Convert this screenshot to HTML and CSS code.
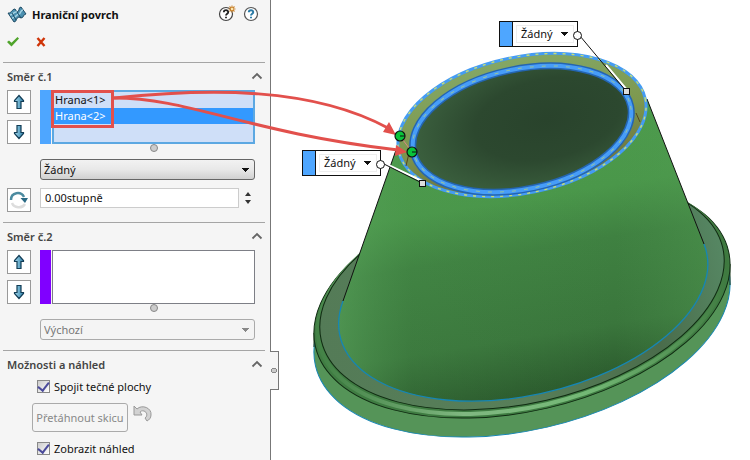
FILE: index.html
```
<!DOCTYPE html>
<html lang="cs">
<head>
<meta charset="utf-8">
<title>Hraniční povrch</title>
<link rel="stylesheet" href="styles.css">
</head>
<body>
<svg class="defs" width="0" height="0" aria-hidden="true">
  <defs>
    <linearGradient id="steel" x1="0" y1="0" x2="1" y2="0"><stop offset="0" stop-color="#a8dcf0"/><stop offset="1" stop-color="#2e7fa8"/></linearGradient>
    <symbol id="arrow-up" viewBox="0 0 14 16"><path d="M7 1.500 11.500 6.500V7.500H9V14.500H5V7.500H2.500V6.500Z" fill="url(#steel)" stroke="#123c55" stroke-width="1.200"/></symbol>
    <symbol id="arrow-down" viewBox="0 0 14 16"><path d="M7 14.500 11.500 9.500V8.500H9V1.500H5V8.500H2.500V9.500Z" fill="url(#steel)" stroke="#123c55" stroke-width="1.200"/></symbol>
    <symbol id="chevron" viewBox="0 0 12 8"><path d="M1.500 6.500 6 2 10.500 6.500" fill="none" stroke="#666" stroke-width="1.800"/></symbol>
  </defs>
</svg>
<main class="app">
  <aside class="panel">
    <header class="panel-head">
      <svg class="surface-icon" width="20" height="18" viewBox="0 0 20 18" aria-hidden="true">
        <path d="M1 7C4 8 5 3 8 3L10 6C13 6 11 1 14 1L19 8C16 8 17 12 14 12L12 11C9 11 10 16 7 16Z" fill="#4b90b0" stroke="#1d4a63"/>
        <path d="M3 9C7 9 6 5 10 6M5 12C9 12 8 9 12 8C14 8 13 4 16 4" fill="none" stroke="#a5d3e4" stroke-width="1.500"/>
        <path d="M10 6 14 12M5 7 9 14" fill="none" stroke="#1d4a63"/>
      </svg>
      <h1>Hraniční povrch</h1>
      <button class="plain" aria-label="Novinky">
        <svg width="20" height="18" viewBox="0 0 20 18"><circle cx="8" cy="10" r="6.500" fill="#fff" stroke="#444" stroke-width="1.200"/><path d="M5.800 8.300C5.800 5.500 10.300 5.500 10.200 8.200C10.200 9.700 8 9.700 8 11.500M8 12.700V14.300" fill="none" stroke="#222" stroke-width="1.800"/><path d="M14 1.500V8.500M10.500 5H17.500M11.500 2.500 16.500 7.500M16.500 2.500 11.500 7.500" stroke="#c9822c" stroke-width="1.100"/><circle cx="14" cy="5" r="1.200" fill="#ffe9b0"/></svg>
      </button>
      <button class="plain" aria-label="Nápověda">
        <svg width="16" height="18" viewBox="0 0 16 18"><circle cx="8" cy="10" r="6.500" fill="#fff" stroke="#555" stroke-width="1.200"/><path d="M5.800 8.300C5.800 5.500 10.300 5.500 10.200 8.200C10.200 9.700 8 9.700 8 11.500M8 12.700V14.300" fill="none" stroke="#2b7ba6" stroke-width="2"/></svg>
      </button>
    </header>
    <div class="confirm">
      <button class="plain" aria-label="OK"><svg width="12" height="10" viewBox="0 0 12 10"><path d="M0 5 2 3.500 4.500 5.800 10.500 0 12 1.500 4.500 9.500Z" fill="#4fa42b"/></svg></button>
      <button class="plain" aria-label="Zrušit"><svg width="10" height="10" viewBox="0 0 10 10"><path d="M1.500 1 8.500 9M8.500 1 1.500 9" stroke="#cf3408" stroke-width="2.400"/></svg></button>
    </div>

    <section class="group">
      <div class="group-head"><h2 id="dir1">Směr č.1</h2><button class="plain" aria-label="Sbalit"><svg width="12" height="8"><use href="#chevron"/></svg></button></div>
      <div class="fields">
        <div class="movers">
          <button class="tool" aria-label="Nahoru"><svg width="14" height="16"><use href="#arrow-up"/></svg></button>
          <button class="tool" aria-label="Dolů"><svg width="14" height="16"><use href="#arrow-down"/></svg></button>
        </div>
        <div class="picker picker-blue">
          <select multiple size="3" class="list" aria-labelledby="dir1">
            <option>Hrana&lt;1&gt;</option>
            <option selected>Hrana&lt;2&gt;</option>
          </select>
        </div>
        <div class="grip"></div>
        <select class="combo" aria-label="Typ tečnosti"><option>Žádný</option></select>
        <button class="tool angle-tool" aria-label="Obrátit směr">
          <svg width="20" height="20" viewBox="0 0 20 20"><path d="M3 13C5 18 13 19 16 14" fill="none" stroke="#ddd" stroke-width="2.500"/><path d="M2 10C2 2 12 1 15 7" fill="none" stroke="#4c8ba0" stroke-width="2.500"/><path d="M11.500 8H19L16 13Z" fill="#2a6a85"/></svg>
        </button>
        <div class="spin">
          <input type="text" value="0.00stupně" aria-label="Úhel">
          <div class="spin-buttons">
            <button class="plain" aria-label="Zvýšit"><svg width="6" height="4"><path d="M0 4 3 0 6 4Z" fill="#333"/></svg></button>
            <button class="plain" aria-label="Snížit"><svg width="6" height="4"><path d="M0 0 3 4 6 0Z" fill="#333"/></svg></button>
          </div>
        </div>
      </div>
    </section>

    <section class="group">
      <div class="group-head"><h2 id="dir2">Směr č.2</h2><button class="plain" aria-label="Sbalit"><svg width="12" height="8"><use href="#chevron"/></svg></button></div>
      <div class="fields">
        <div class="movers">
          <button class="tool" aria-label="Nahoru"><svg width="14" height="16"><use href="#arrow-up"/></svg></button>
          <button class="tool" aria-label="Dolů"><svg width="14" height="16"><use href="#arrow-down"/></svg></button>
        </div>
        <div class="picker picker-violet">
          <select multiple size="3" class="list" aria-labelledby="dir2"></select>
        </div>
        <div class="grip"></div>
        <select class="combo" disabled aria-label="Typ tečnosti"><option>Výchozí</option></select>
      </div>
    </section>

    <section class="group">
      <div class="group-head"><h2>Možnosti a náhled</h2><button class="plain" aria-label="Sbalit"><svg width="12" height="8"><use href="#chevron"/></svg></button></div>
      <div class="options">
        <label class="check"><input type="checkbox" checked>Spojit tečné plochy</label>
        <div class="drag-row">
          <button class="drag" disabled>Přetáhnout skicu</button>
          <svg width="19" height="18" viewBox="0 0 19 18" aria-hidden="true"><path d="M1 1 4 4C9-1 19 3 18 10C18 13 16 15 14 16L12 13C15 11 14 7 11 6C9 5.500 8 6 7 7L9 10H1Z" fill="#d2d2d2" stroke="#999"/></svg>
        </div>
        <label class="check"><input type="checkbox" checked>Zobrazit náhled</label>
      </div>
    </section>
    <button class="splitter" aria-label="Skrýt panel"></button>
  </aside>

  <div class="viewport"></div>

  <svg class="scene" width="750" height="460" viewBox="0 0 750 460" role="img" aria-label="Náhled hraničního povrchu">
    <defs>
      <linearGradient id="body" gradientUnits="userSpaceOnUse" x1="500" y1="110" x2="545" y2="392">
        <stop offset="0" stop-color="#4d9c4c"/><stop offset=".32" stop-color="#4a974a"/><stop offset=".5" stop-color="#3f8141"/><stop offset=".8" stop-color="#3a763c"/><stop offset="1" stop-color="#2b5a2d"/>
      </linearGradient>
      <linearGradient id="sheen" x1="0" y1="0" x2="1" y2="0">
        <stop offset="0" stop-color="#5faa62" stop-opacity=".5"/><stop offset=".2" stop-color="#4f9852" stop-opacity=".12"/><stop offset=".75" stop-color="#4f9852" stop-opacity="0"/><stop offset="1" stop-color="#56a056" stop-opacity=".35"/>
      </linearGradient>
      <radialGradient id="hole" cx=".62" cy=".46" r=".6"><stop offset="0" stop-color="#29432c"/><stop offset=".55" stop-color="#2c482f"/><stop offset="1" stop-color="#3a5e3d"/></radialGradient>
      <linearGradient id="flange" x1="0" y1="0" x2="1" y2="0"><stop offset="0" stop-color="#547b57"/><stop offset=".45" stop-color="#587f59"/><stop offset=".8" stop-color="#4a6c4b"/><stop offset="1" stop-color="#568763"/></linearGradient>
      <linearGradient id="bead" x1="0" y1="0" x2="1" y2="0"><stop offset="0" stop-color="#448347"/><stop offset=".3" stop-color="#80b881"/><stop offset=".6" stop-color="#73b875"/><stop offset="1" stop-color="#3e793f"/></linearGradient>
      <linearGradient id="lip" x1="0" y1="0" x2="0" y2="1"><stop offset="0" stop-color="#84a765"/><stop offset=".5" stop-color="#7d984f"/><stop offset="1" stop-color="#686c3d"/></linearGradient>
    </defs>
    <g stroke-width="1">
      <ellipse cx="522" cy="318" rx="212" ry="112" transform="rotate(-13 522 318)" fill="#559458" stroke="#1686b4"/>
      <path d="M314 333V347M730 264V285" stroke="#163417"/>
      <ellipse cx="522" cy="299" rx="212" ry="112" transform="rotate(-13 522 299)" fill="#3f7c42" stroke="#102b12"/>
      <ellipse cx="522" cy="297" rx="208" ry="110" transform="rotate(-13 522 297)" fill="none" stroke="url(#bead)" stroke-width="4"/>
      <ellipse cx="522" cy="294" rx="206" ry="109" transform="rotate(-13 522 294)" fill="url(#flange)" stroke="#102b12"/>
      <path d="M343 301A188 101 -13 1 0 704 244L647 99 396 150Z" fill="url(#body)"/>
      <path d="M343 301A188 101 -13 1 0 704 244L647 99 396 150Z" fill="url(#sheen)"/>
      <path d="M343 301A188 101 -13 1 0 704 244" fill="none" stroke="#1686b4" stroke-width="1.300"/>
      <path d="M396 150 343 301M647 99 704 244" fill="none" stroke="#111"/>
    </g>
    <ellipse cx="522" cy="125" rx="126" ry="68" transform="rotate(-12 522 125)" fill="url(#lip)" stroke="#459cf3" stroke-width="3"/>
    <ellipse cx="522" cy="125" rx="126" ry="68" transform="rotate(-12 522 125)" fill="none" stroke="#c7df72" stroke-width="1.400" stroke-dasharray="3 6"/>
    <ellipse cx="522" cy="129" rx="111" ry="60" transform="rotate(-12 522 129)" fill="url(#hole)" stroke="#2465b2" stroke-width="7"/>
    <ellipse cx="522" cy="129" rx="111" ry="60" transform="rotate(-12 522 129)" fill="none" stroke="#479df8" stroke-width="4"/>
    <ellipse cx="522" cy="129" rx="111" ry="60" transform="rotate(-12 522 129)" fill="none" stroke="#b9d47a" stroke-opacity=".7" stroke-width="1" stroke-dasharray="4 8"/>
    <path d="M636 113 640 122M409 153 406 166" stroke="#54451e"/>
    <path d="M400 136 412 152" stroke="#d88983"/>
    <g fill="none" stroke="#e2504c" stroke-width="3">
      <rect x="52.500" y="91.500" width="60" height="35"/>
      <path d="M114 98C210 88 312 87 388 128"/>
      <path d="M114 98C190 98 245 132 398 150"/>
    </g>
    <path d="M396 135 383 132 389 122ZM407 152 395 156 396 145Z" fill="#e2504c"/>
    <g fill="#09c43a" stroke="#111" stroke-width="1.200">
      <circle cx="400" cy="136" r="5"/><circle cx="412" cy="152" r="5"/>
      <path d="M400 136H405M412 152H417"/>
    </g>
    <path d="M606 65 627 90M384 163 422 181" stroke="#fff" stroke-width="2"/>
    <path d="M580 36 626 91M384 164 422 183" stroke="#111"/>
    <g fill="#ddd" stroke="#111"><rect x="623.500" y="88.500" width="6" height="6"/><rect x="419.500" y="180.500" width="6" height="6"/></g>
  </svg>
  <div class="callout callout-top"><select aria-label="Hrana 2"><option>Žádný</option></select></div>
  <div class="callout callout-left"><select aria-label="Hrana 1"><option>Žádný</option></select></div>
</main>
</body>
</html>
```
FILE: styles.css
```
* { box-sizing: border-box; }
body {
  margin: 0;
  background: #fff;
  color: #111;
  font: 11px/16px "Noto Sans", "Open Sans", sans-serif;
}
button, input, select { font: inherit; color: inherit; margin: 0; }
svg { display: block; flex: none; }
.defs { position: absolute; }

.app { position: relative; display: flex; min-height: 100vh; overflow: hidden; }
.panel {
  position: relative;
  flex: 0 0 271px;
  padding: 0 5px 0 3px;
  background: #f5f5f5;
  border-right: 1px solid #777;
}
.viewport { flex: 1; }
.plain { display: block; padding: 0; border: 0; background: none; }

.panel-head { display: flex; align-items: center; gap: 8px; height: 30px; padding: 0 6px 0 4px; }
.panel-head h1 { flex: 1; margin: 0; font-size: 11px; font-weight: 700; white-space: nowrap; }
.panel-head button { margin-top: -5px; }
.panel-head button + button { margin-left: -3px; }
.surface-icon { margin-right: -3px; }
.confirm { display: flex; align-items: center; gap: 17px; height: 32px; padding: 0 4px 8px; }

.group { border-top: 1px solid #a5a5a5; padding: 0 10px 10px 4px; }
.group-head { display: flex; align-items: center; justify-content: space-between; height: 27px; margin-right: -10px; }
.group-head h2 { margin: 0; font-size: 11px; font-weight: 600; color: #444; }
.group-head .plain { padding: 0 2px 2px; }

.fields { display: grid; grid-template-columns: 24px 1fr; column-gap: 9px; }
.movers { display: flex; flex-direction: column; justify-content: space-between; height: 54px; }
.tool {
  display: grid;
  place-items: center;
  width: 24px;
  height: 24px;
  padding: 0;
  background: #fff;
  border: 1px solid #999;
}
.picker { display: flex; gap: 1px; height: 54px; }
.picker::before { content: ""; width: 11px; background: #4ea6ff; }
.picker-violet::before { background: #8000ff; }
.list {
  flex: 1;
  min-width: 0;
  padding: 0;
  border: 1px solid #7d7f86;
  border-radius: 0;
  background: #fff;
  overflow: hidden;
  outline: 0;
}
.picker-blue .list { border: 2px solid #5ca8e2; background: #cfdff8; }
.list option { height: 16px; min-height: 16px; padding: 0 1px; line-height: 16px; }
.list option:checked {
  background: #3399ff linear-gradient(#3399ff, #3399ff);
  color: #fff;
  -webkit-text-fill-color: #fff;
}
.grip { grid-column: 2; height: 15px; padding-left: 110px; }
.grip::before {
  content: "";
  display: block;
  width: 6px;
  height: 6px;
  border: 1px solid #888;
  border-radius: 50%;
  background: #ccc;
}
.combo {
  grid-column: 2;
  height: 21px;
  padding: 0 3px;
  border: 1px solid #666;
  border-radius: 3px;
  appearance: none;
}
.combo, .callout select {
  background-image: linear-gradient(to bottom right, #111 50%, transparent 0), linear-gradient(to bottom left, #111 50%, transparent 0), linear-gradient(#f2f2f2, #e8e8e8 50%, #d0d0d0);
  background-position: right 4px center, right 8px center, 0 0;
  background-size: 4px 4px, 4px 4px, 100% 100%;
  background-repeat: no-repeat;
}
.combo:disabled {
  color: #777;
  opacity: 1;
  border-color: #aaa;
  background-image: linear-gradient(to bottom right, #888 50%, transparent 0), linear-gradient(to bottom left, #888 50%, transparent 0), linear-gradient(#f4f4f4, #f4f4f4);
}
.angle-tool { margin-top: 8px; }
.spin { display: flex; gap: 6px; height: 20px; margin-top: 8px; }
.spin input { flex: 1; min-width: 0; padding: 0 4px; border: 1px solid #ccc; background: #fff; }
.spin-buttons { display: flex; flex-direction: column; justify-content: space-around; padding: 2px 0; width: 10px; }

.options { display: grid; gap: 8px; padding-left: 25px; }
.check { display: flex; align-items: center; gap: 4px; height: 17px; padding-left: 5px; }
.check input {
  appearance: none;
  width: 13px;
  height: 13px;
  border: 1px solid #888;
  background: linear-gradient(135deg, #ccc, #fff);
  display: grid;
  place-items: center;
}
.check input:checked::after {
  content: "";
  width: 5px;
  height: 9px;
  margin-top: -3px;
  border: solid #4b4b9b;
  border-width: 0 2px 2px 0;
  transform: rotate(38deg);
}
.drag-row { display: flex; gap: 5px; height: 29px; }
.drag-row svg { margin-top: 2px; }
.drag {
  padding: 0 3px;
  width: 96px;
  border: 1px solid #aaa;
  border-radius: 3px;
  background: #f5f5f5;
  color: #888;
  white-space: nowrap;
}
.splitter {
  position: absolute;
  left: 270px;
  top: 351px;
  width: 9px;
  height: 39px;
  padding: 0;
  border: 1px solid #777;
  border-left: 0;
  background: radial-gradient(circle at 4px 50%, #ccc 2px, #888 2px 3px, #f5f5f5 3px);
}

.scene { position: absolute; left: 0; top: 0; pointer-events: none; }
.callout {
  position: absolute;
  display: flex;
  width: 79px;
  height: 26px;
  border: 1px solid #111;
  background: #fff;
}
.callout::before { content: ""; width: 12px; background: #4ea6ff; border-right: 1px solid #111; }
.callout::after {
  content: "";
  position: absolute;
  right: -5px;
  top: 9px;
  width: 7px;
  height: 7px;
  border: 1px solid #111;
  border-radius: 50%;
  background: #fff;
}
.callout select {
  flex: 1;
  min-width: 0;
  margin: 3px;
  padding: 0 4px;
  border: 1px solid #eee;
  appearance: none;
  background-image: linear-gradient(to bottom right, #111 50%, transparent 0), linear-gradient(to bottom left, #111 50%, transparent 0), linear-gradient(#fff, #fff);
}
.callout-top { left: 499px; top: 21px; }
.callout-left { left: 302px; top: 150px; }
```
